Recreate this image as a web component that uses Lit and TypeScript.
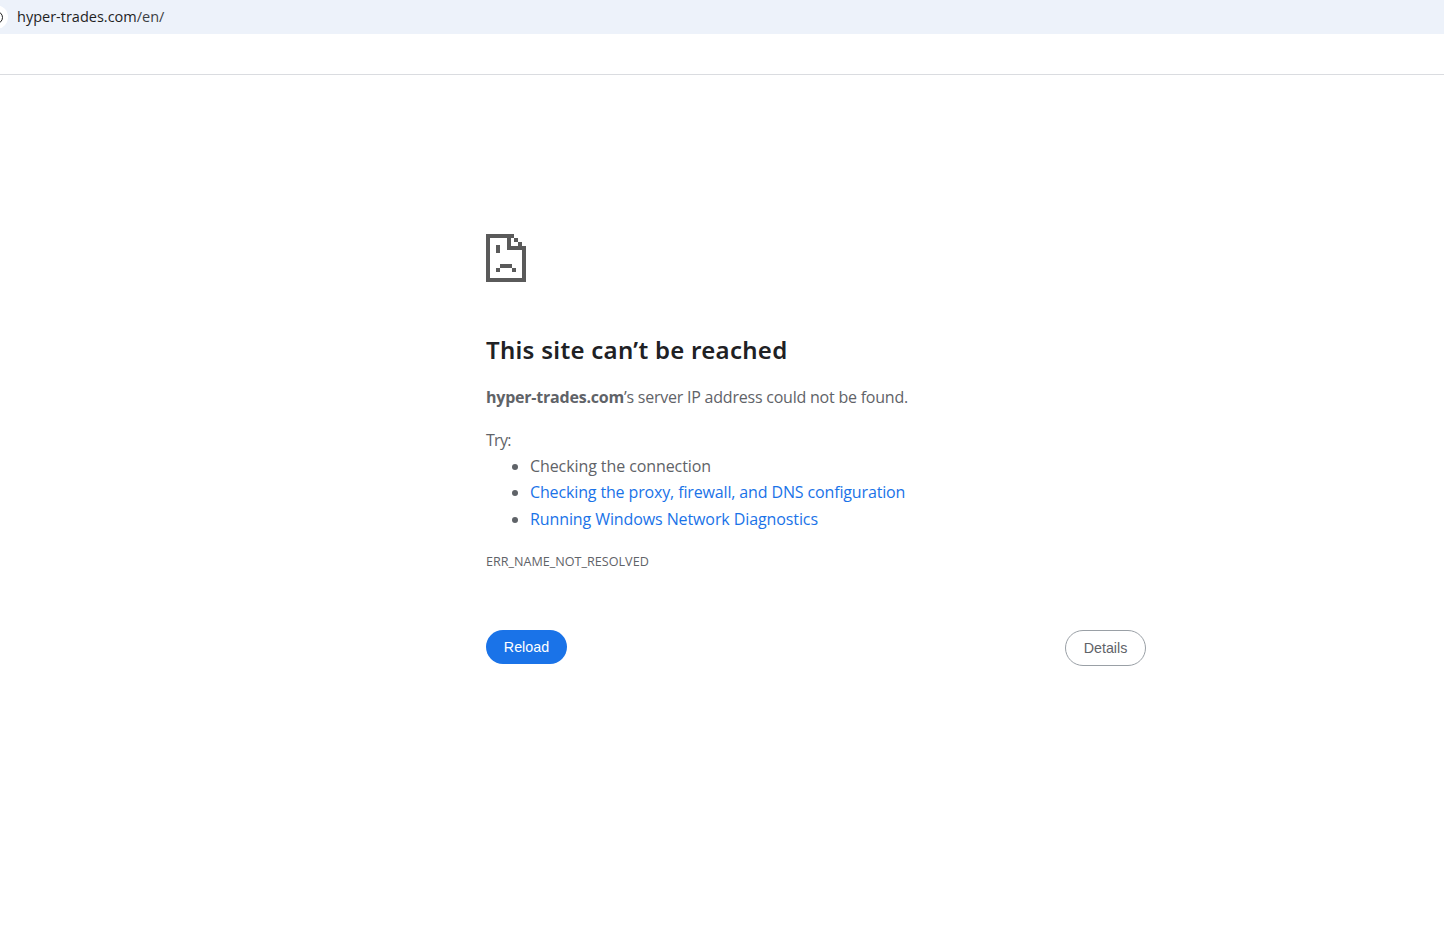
import { LitElement, html, css } from "lit";
import { customElement } from "lit/decorators.js";

@customElement("app-root")
export class AppRoot extends LitElement {
  static styles = css`
    :host { display: block; height: 951px; background: #fff; font-family: "Open Sans", "Noto Sans", sans-serif; color: #5f6368; overflow: hidden; }
    .url { height: 34px; background: #edf2fa; display: flex; align-items: center; padding-left: 17px; font-size: 14.5px; color: #3c4043; position: relative; }
    .url > span:last-child { position: relative; top: -1px; }
    .url b { font-weight: 400; color: #1f1f1f; }
    .halo { position: absolute; left: -16px; top: 5px; width: 24px; height: 24px; border-radius: 50%; background: #fff; display: flex; align-items: center; justify-content: center; }
    .ring { width: 13px; height: 13px; box-sizing: border-box; border: 1.5px solid #1f1f1f; border-radius: 50%; }
    .bar { height: 40px; border-bottom: 1px solid #dadce0; }
    .main { width: 660px; margin-left: 486px; padding-top: 159px; }
    .icon { display: block; width: 40px; height: 48px; }
    h1 { margin: 50px 0 0; font-size: 24px; line-height: 36px; font-weight: 600; letter-spacing: 0.28px; color: #202124; font-family: "Noto Sans", sans-serif; }
    .desc { margin: 16px 0 0; font-size: 16px; line-height: 26px; letter-spacing: -0.22px; }
    .desc b { font-weight: 700; }
    .try { margin: 17px 0 0; font-size: 16px; line-height: 26px; letter-spacing: -0.7px; }
    ul { margin: 0; padding: 0 0 0 44px; font-size: 16px; line-height: 26.4px; }
    li:nth-child(1) { letter-spacing: -0.09px; }
    li:nth-child(2) { letter-spacing: -0.14px; }
    li:nth-child(3) { letter-spacing: -0.1px; }
    a { color: #1a73e8; text-decoration: none; }
    .code { margin-top: 21px; font-size: 12.6px; line-height: 18px; }
    .buttons { display: flex; justify-content: space-between; align-items: flex-start; margin-top: 59px; }
    button { font-family: "Liberation Sans", Arial, sans-serif; font-size: 14.3px; border-radius: 18px; height: 34px; }
    .reload { background: #1a73e8; color: #fff; border: 0; width: 81px; padding: 0; }
    .details { background: #fff; color: #5f6368; border: 1px solid #9aa0a6; height: 36px; width: 81px; padding: 0; }
  `;
  render() {
    return html`
      <div class="url"><span class="halo"><span class="ring"></span></span><span><b>hyper-trades.com</b>/en/</span></div>
      <div class="bar"></div>
      <div class="main">
        <svg class="icon" viewBox="0 0 40 48" shape-rendering="crispEdges" fill="#5a5a5a">
          <path d="M0 0h28v4H0zM0 0h4v48H0zM0 44h40v4H0zM36 12h4v36h-4zM21 0h4v16h-4zM21 12h19v4H21z"/>
          <path d="M28 4h4v4h-4zM32 8h4v4h-4z"/>
          <path d="M10 11h4v8h-4zM14 30h12v4H14zM10 34h4v4h-4zM26 34h4v4h-4z"/>
        </svg>
        <h1>This site can’t be reached</h1>
        <p class="desc"><b>hyper-trades.com</b>’s server IP address could not be found.</p>
        <p class="try">Try:</p>
        <ul>
          <li>Checking the connection</li>
          <li><a href="#">Checking the proxy, firewall, and DNS configuration</a></li>
          <li><a href="#">Running Windows Network Diagnostics</a></li>
        </ul>
        <div class="code">ERR_NAME_NOT_RESOLVED</div>
        <div class="buttons">
          <button class="reload">Reload</button>
          <button class="details">Details</button>
        </div>
      </div>
    `;
  }
}
